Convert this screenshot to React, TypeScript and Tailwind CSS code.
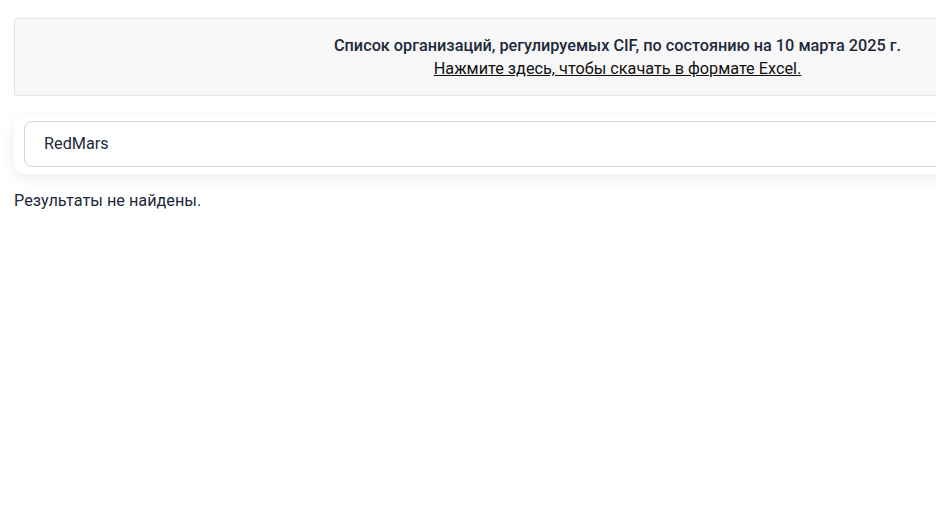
export default function App() {
  return (
    <div className="w-full h-screen overflow-hidden bg-white" style={{ fontFamily: "Roboto, 'Liberation Sans', sans-serif" }}>
      <div className="w-[1235px] px-[14px] pt-[18px] text-[#1e293b]">
        {/* Banner */}
        <div className="h-[78px] bg-[#f7f7f7] border border-[#e6e6e6] flex flex-col items-center justify-center text-[16.25px] leading-[23px]">
          <p className="font-medium">
            Список организаций, регулируемых CIF, по состоянию на 10 марта 2025 г.
          </p>
          <a href="#" className="underline text-[#111]">
            Нажмите здесь, чтобы скачать в формате Excel.
          </a>
        </div>

        {/* Search */}
        <div className="mt-[19px] bg-white rounded-[10px] pt-[6px] pb-[7px] px-[10px] shadow-[0_4px_14px_rgba(0,0,0,0.08)]">
          <div className="h-[46px] border border-[#cfd4da] rounded-[8px] flex items-center pl-[19px] pt-[1px] text-[16.25px] text-[#1e293b]">
            RedMars
          </div>
        </div>

        <p className="mt-[16px] text-[16.25px] leading-[22px]">Результаты не найдены.</p>
      </div>
    </div>
  );
}
